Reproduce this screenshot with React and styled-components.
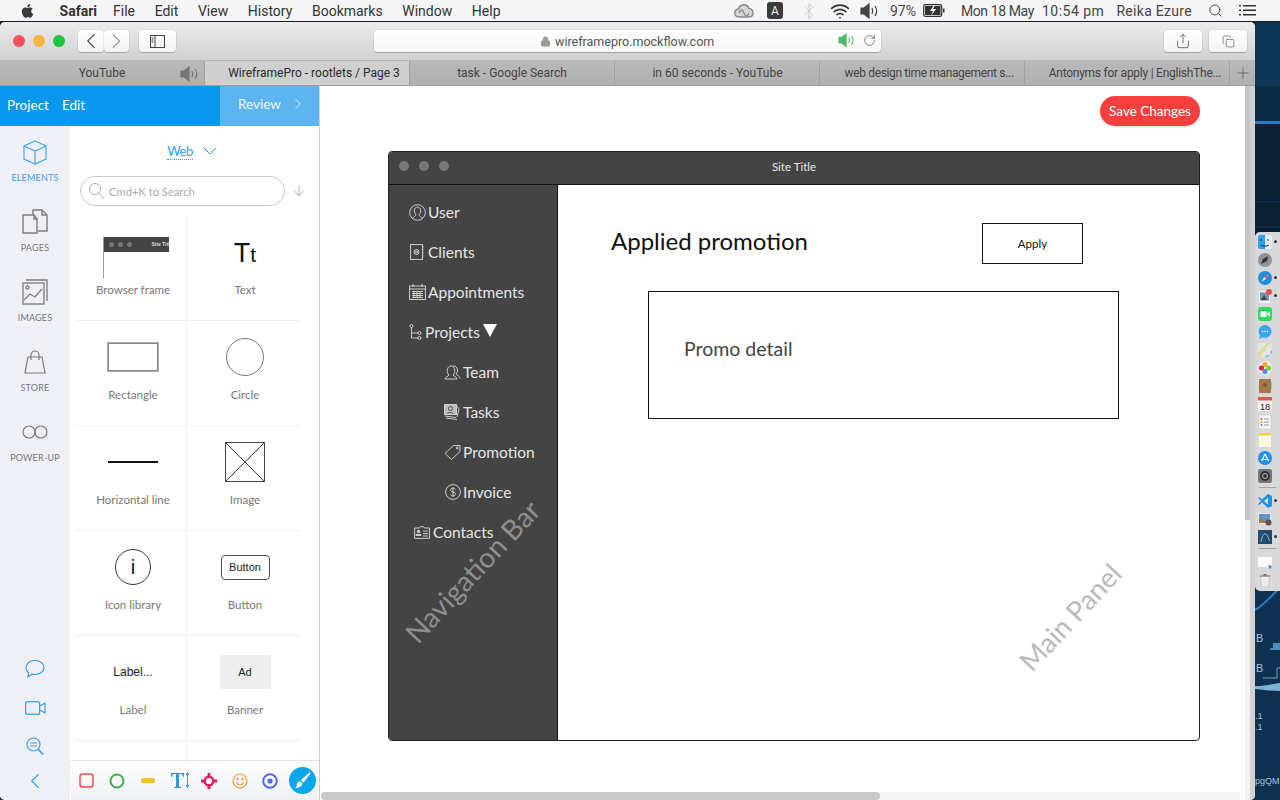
import React from 'react';
import styled, { createGlobalStyle } from 'styled-components';
import { ChevronLeft, ChevronRight, ChevronDown, Share, Copy, Plus, ArrowDown, Search, RotateCw, Lock, Wifi, Bluetooth } from 'lucide-react';

const Global = createGlobalStyle`
  html, body { margin: 0; padding: 0; width: 1280px; height: 800px; overflow: hidden; background: #0c2236; }
  * { box-sizing: border-box; }
  #root { width: 1280px; height: 800px; }
`;

const Screen = styled.div`
  position: relative; width: 1280px; height: 800px; display: flex; flex-direction: column; overflow: hidden;
`;
const MenuBar = styled.div`
  height: 22px; flex: none; background: #f5f5f5; display: flex; align-items: center; padding: 0 24px 0 20px;
  font: 14px Roboto, "Liberation Sans", sans-serif; color: #333; border-bottom: 1px solid #15202c;
`;
const MenuLeft = styled.div`display: flex; align-items: center; gap: 19.6px;`;
const AppName = styled.span`font-weight: 700; margin-left: 6px; margin-right: -3.6px;`;
const MenuRight = styled.div`margin-left: auto; display: flex; align-items: center;`;
const MenuItem = styled.span`
  margin-left: ${p => p.$ml || 0}px; display: flex; align-items: center; color: #444; white-space: nowrap; letter-spacing: ${p => p.$ls || 0}px;
`;
const ABadge = styled.span`
  width: 16px; height: 17px; border-radius: 3px; background: #3b3b3b; color: #eee; font-size: 12px;
  display: flex; align-items: center; justify-content: center;
`;

const Body = styled.div`flex: 1; display: flex; min-height: 0;`;
const Win = styled.div`
  width: 1255px; flex: none; display: flex; flex-direction: column; border-radius: 5px; overflow: hidden; background: #fff;
`;
const Desktop = styled.div`flex: 1; background: #0c2236; position: relative; overflow: hidden;`;

const Toolbar = styled.div`
  height: 39px; flex: none; background: linear-gradient(#ebebeb, #d2d2d2); border-bottom: 1px solid #b8b8b8;
  display: flex; align-items: center; padding: 0 8px 0 13px;
`;
const Light = styled.span`
  width: 12px; height: 12px; border-radius: 50%; background: ${p => p.$c}; margin-right: 8px; flex: none;
`;
const ToolBtn = styled.div`
  height: 22px; width: ${p => p.$w}px; margin-left: ${p => p.$ml || 0}px; background: linear-gradient(#fff, #f3f3f3); border-radius: 4px;
  box-shadow: 0 1px 1px rgba(0,0,0,.22), 0 0 0 .5px rgba(0,0,0,.08); display: flex; align-items: center; justify-content: center; color: #555; flex: none;
`;
const AddressBar = styled.div`
  width: 507px; height: 22px; margin-left: 198px; background: linear-gradient(#fff, #f6f6f6); border-radius: 4px;
  box-shadow: 0 1px 1px rgba(0,0,0,.22), 0 0 0 .5px rgba(0,0,0,.08); display: flex; align-items: center; position: relative; flex: none;
  font: 12.5px Roboto, sans-serif; color: #555; padding-left: 166px; gap: 4px;
`;
const AddressEnd = styled.div`position: absolute; right: 5px; top: 3px; display: flex; align-items: center; gap: 7px; color: #555;`;

const TabBar = styled.div`
  height: 25px; flex: none; display: flex; background: linear-gradient(#b9b9b9, #b0b0b0); border-bottom: 1px solid #9f9f9f;
  font: 12px Roboto, sans-serif; color: #3f3f3f;
`;
const Tab = styled.div`
  width: 205px; flex: none; position: relative; display: flex; align-items: center; justify-content: center;
  border-right: 1px solid #a0a0a0; background: ${p => p.$active ? '#cfcfcf' : 'transparent'}; color: ${p => p.$active ? '#2a2a2a' : '#444'};
  white-space: nowrap; padding-left: ${p => p.$pad || 0}px; letter-spacing: ${p => p.$ls || 0}px;
`;
const TabSpeaker = styled.span`position: absolute; right: 4px; top: 5px; display: flex;`;
const TabPlus = styled.div`flex: 1; display: flex; align-items: center; justify-content: center; color: #555;`;

const AppArea = styled.div`flex: 1; display: flex; min-height: 0; position: relative;`;
const LeftPanel = styled.div`width: 320px; flex: none; display: flex; flex-direction: column; border-right: 1px solid #d0d0d0;`;
const AppHeader = styled.div`height: 40px; flex: none; display: flex; font: 13.5px Lato, "Noto Sans", sans-serif; color: #fff;`;
const HeaderMain = styled.div`width: 220px; background: #0998ee; display: flex; align-items: center; padding: 0 0 2px 7px; gap: 13px;`;
const HeaderReview = styled.div`flex: 1; background: #5cb5f0; display: flex; align-items: center; padding: 0 0 4px 18px; gap: 8px; color: #eef7ff;`;

const PanelBody = styled.div`flex: 1; display: flex; min-height: 0;`;
const Rail = styled.div`width: 70px; flex: none; background: #eef0f5; display: flex; flex-direction: column; padding-top: 12px;`;
const RailItem = styled.div`
  height: 70px; flex: none; display: flex; flex-direction: column; align-items: center;
  color: ${p => p.$active ? '#3a9df0' : '#777'}; font: 9px Lato, "Noto Sans", sans-serif; letter-spacing: .2px;
`;
const RailIcon = styled.div`height: 28px; width: 100%; display: flex; align-items: center; justify-content: center; margin-bottom: 6px;`;
const RailBottom = styled.div`margin-top: auto; display: flex; flex-direction: column; align-items: center; padding-bottom: 3px;`;
const RailTool = styled.div`height: ${p => p.$h}px; display: flex; align-items: center; justify-content: center; color: #3a9df0;`;

const Palette = styled.div`flex: 1; display: flex; flex-direction: column; min-width: 0; background: #fff;`;
const WebSwitch = styled.div`
  height: 50px; flex: none; display: flex; align-items: center; justify-content: center; gap: 5px; color: #2f9df0;
  font: 13px Lato, "Noto Sans", sans-serif; letter-spacing: -.5px;
`;
const WebLabel = styled.span`border-bottom: 1px dotted #2f9df0; line-height: 16px;`;
const SearchRow = styled.div`display: flex; align-items: center; height: 30px; flex: none; padding-left: 10px; color: #888;`;
const SearchField = styled.div`
  width: 205px; height: 30px; flex: none; border: 1px solid #c9c9c9; border-radius: 15px; display: flex; align-items: center; padding-left: 7px; gap: 4px;
  color: #aaa; font: 11.2px Lato, "Noto Sans", sans-serif; margin-right: 6px;
`;
const Grid = styled.div`
  flex: 1; min-height: 0; margin: 10px 20px 0 5px; display: grid; grid-template-columns: 112px 112px; grid-auto-rows: 105px; overflow: hidden; position: relative;
`;
const Cell = styled.div`
  border-bottom: 1px solid #eee; border-right: ${p => p.$right ? 'none' : '1px solid #eee'}; display: flex; flex-direction: column; align-items: center;
  font: 11.5px Lato, "Noto Sans", sans-serif; color: #777; padding-left: ${p => p.$right ? 4 : 5}px;
`;
const Preview = styled.div`height: 60px; margin-top: 6px; display: flex; align-items: center; justify-content: center; width: 100%; color: #222;`;
const Caption = styled.div`line-height: 16px;`;

const MiniFrame = styled.div`
  width: 66px; height: 41px; border-left: 1px solid #999; position: relative; margin: 10px 0 0 5px;
`;
const MiniBar = styled.div`
  height: 15px; background: #444; display: flex; align-items: center; padding-left: 5px; gap: 4px;
  font: 5px "Liberation Sans", sans-serif; color: #ddd; overflow: hidden; white-space: nowrap;
`;
const MiniDot = styled.i`width: 5px; height: 5px; border-radius: 50%; background: #777; flex: none;`;
const MiniTitle = styled.span`margin-left: 16px; font-weight: 700;`;
const TextIcon = styled.div`font: 27px "Liberation Sans", sans-serif; color: #111; margin-top: 3px; span { font-size: 21px; }`;
const RectIcon = styled.div`width: 50px; height: 28px; border: 1px solid #888; outline: .5px solid #aaa;`;
const CircleIcon = styled.div`width: 38px; height: 38px; border-radius: 50%; border: 1px solid #777;`;
const LineIcon = styled.div`width: 50px; height: 2px; background: #111;`;
const InfoIcon = styled.div`
  width: 36px; height: 36px; border-radius: 50%; border: 1px solid #333; display: flex; align-items: center; justify-content: center;
  font: 20px "Liberation Sans", sans-serif; color: #111;
`;
const ButtonIcon = styled.div`
  width: 49px; height: 25px; border: 1px solid #555; border-radius: 4px; display: flex; align-items: center; justify-content: center; font: 11px "Liberation Sans", sans-serif; color: #222;
`;
const LabelIcon = styled.div`font: 12px "Liberation Sans", sans-serif; color: #222;`;
const BannerIcon = styled.div`
  width: 51px; height: 34px; background: #eee; display: flex; align-items: center; justify-content: center; font: 11px "Liberation Sans", sans-serif; color: #222;
`;
const BottomTools = styled.div`
  position: absolute; left: 71px; width: 248px; bottom: 0; height: 40px; background: linear-gradient(#fff, #eef0f4); border-top: 1px solid #e4e4e4;
  display: flex; align-items: center;
`;
const ToolSlot = styled.div`width: ${p => p.$w || 30.7}px; display: flex; align-items: center; justify-content: center; flex: none;`;
const BrushBtn = styled.div`
  width: 27px; height: 27px; border-radius: 50%; background: #08a6ea; display: flex; align-items: center; justify-content: center;
`;

const Canvas = styled.div`flex: 1; min-width: 0; position: relative; padding: 10px 0 0 68px; background: #fff; display: flex; flex-direction: column;`;
const SaveRow = styled.div`height: 55px; flex: none; width: 812px; display: flex; justify-content: flex-end; align-items: flex-start;`;
const SaveBtn = styled.div`
  width: 100px; height: 30px; border-radius: 15px; background: #f83f3f; color: #fff; font: 13.5px Lato, "Noto Sans", sans-serif;
  display: flex; align-items: center; justify-content: center; box-shadow: 0 1px 2px rgba(0,0,0,.15);
`;
const Frame = styled.div`
  width: 812px; height: 590px; border: 1px solid #222; border-radius: 4px; display: flex; flex-direction: column; overflow: hidden; position: relative; background: #fff;
`;
const FrameBar = styled.div`
  height: 32px; flex: none; background: #444; position: relative; display: flex; align-items: center; justify-content: center; padding-bottom: 3px;
  font: 11.5px Lato, "Noto Sans", sans-serif; color: #e8e8e8;
`;
const FrameDots = styled.div`position: absolute; left: 10px; top: 9px; display: flex; gap: 10px;`;
const FrameDot = styled.i`width: 10px; height: 10px; border-radius: 50%; background: #777;`;
const FrameBody = styled.div`flex: 1; display: flex; min-height: 0; border-top: 1px solid #111;`;
const Nav = styled.div`
  width: 169px; flex: none; background: #444; border-right: 1px solid #111; padding-top: 7px; display: flex; flex-direction: column;
  font: 15.5px Lato, "Noto Sans", sans-serif; color: #e6e6e6;
`;
const NavRow = styled.div`
  height: 40px; flex: none; display: flex; align-items: center; padding-left: ${p => p.$indent}px; gap: ${p => p.$gap ?? 2}px;
`;
const Triangle = styled.span`
  width: 0; height: 0; border-left: 7px solid transparent; border-right: 7px solid transparent; border-top: 13px solid #fff; margin-top: -3px;
`;
const Watermark = styled.div`
  position: absolute; left: ${p => p.$x}px; top: ${p => p.$y}px; transform: translate(-50%, -50%) rotate(-47deg); white-space: nowrap;
  font: ${p => p.$s}px Lato, "Noto Sans", sans-serif; color: ${p => p.$c};
`;
const MainPanel = styled.div`flex: 1; min-width: 0; padding: 38px 0 0 53px;`;
const HeadRow = styled.div`display: flex; align-items: center; height: 41px;`;
const Heading = styled.div`width: 371px; flex: none; margin-top: -6px; font: 24px Lato, "Noto Sans", sans-serif; color: #111;`;
const ApplyBtn = styled.div`
  width: 101px; height: 41px; border: 1px solid #111; display: flex; align-items: center; justify-content: center; font: 11.5px Lato, "Noto Sans", sans-serif; color: #111;
`;
const Detail = styled.div`
  width: 471px; height: 128px; margin: 27px 0 0 37px; border: 1px solid #111; padding: 45px 0 0 35px; font: 19.5px Lato, "Noto Sans", sans-serif; color: #444;
`;

const VScroll = styled.div`
  position: absolute; right: 0; top: 0; bottom: 0; width: 10px; background: linear-gradient(90deg, #f3f3f3 0 50%, #d2d2d2 50%);
`;
const VThumb = styled.div`position: absolute; left: 0; top: 0; width: 10px; height: 434px; background: linear-gradient(90deg, #c6c6c6 0 50%, #d0d0d0 50%);`;
const HScroll = styled.div`position: absolute; left: 1px; right: 15px; bottom: 0; height: 8px; background: #f5f5f5;`;
const HThumb = styled.div`width: 559px; height: 8px; border-radius: 4px; background: #c9c9c9;`;

const Dock = styled.div`
  position: absolute; left: 1255px; top: 232px; width: 25px; height: 359px; background: #d9d9d9; border-radius: 5px 0 0 5px;
  display: flex; flex-direction: column; padding: 1px 0 0 3px; align-items: flex-start;
`;
const DockSlot = styled.div`height: 18px; width: 22px; flex: none; display: flex; align-items: center; position: relative;`;
const DockDot = styled.i`position: absolute; left: 16px; top: 7px; width: 3px; height: 3px; border-radius: 50%; background: #333;`;
const DockSep = styled.div`width: 17px; height: 1px; background: #a5a5a5; margin: 2px 0 4px 1px; flex: none;`;
const WallLabel = styled.div`
  position: absolute; left: ${p => p.$x}px; top: ${p => p.$y}px; font: ${p => p.$s || 9}px "Liberation Sans", sans-serif; color: #a9c4d8; white-space: nowrap;
`;

const Apple = () => (
  <svg width="14" height="16" viewBox="0 0 14 16" fill="#3a3a3a">
    <path d="M11.2 8.4c0-1.7 1.4-2.5 1.5-2.6-.8-1.2-2.100-1.400-2.500-1.400-1.100-.1-2.100.6-2.600.6-.6 0-1.400-.6-2.300-.6C4.100 4.400 3 5 2.400 6 1.200 8.200 2.100 11.400 3.300 13.100c.6.800 1.300 1.800 2.200 1.700.9 0 1.200-.6 2.300-.6s1.400.6 2.300.6c1 0 1.600-.8 2.200-1.700.7-1 1-1.900 1-2-.1 0-1.900-.7-2.100-2.700z" />
    <path d="M9.500 3.300c.5-.6.800-1.400.7-2.300-.7 0-1.600.5-2.100 1.100-.5.500-.9 1.400-.8 2.200.8.100 1.700-.4 2.200-1z" />
  </svg>
);
const CC = () => (
  <svg width="20" height="16" viewBox="0 0 20 16" fill="none" stroke="#8d8d8d" strokeWidth="1.6">
    <path d="M5 14a4 4 0 0 1-.5-8A5.500 5.500 0 0 1 15 5.500 4.300 4.300 0 0 1 15.500 14z" fill="#d7d7d7" />
    <path d="M5 10c2-4 3-4 5 0s3 4 5 0" />
  </svg>
);
const Speaker = ({ c = '#444', s = 20 }) => (
  <svg width={s} height={s * .8} viewBox="0 0 20 16" fill="none" stroke={c} strokeWidth="1.2">
    <path d="M1 5h3l5-4v14l-5-4H1z" fill={c} />
    <path d="M12 5c1 2 1 4 0 6M15 3c2 3 2 7 0 10" />
  </svg>
);
const Battery = () => (
  <svg width="22" height="13" viewBox="0 0 22 13" fill="none">
    <rect x=".7" y=".7" width="18" height="11.600" rx="1.500" stroke="#333" strokeWidth="1.200" />
    <rect x="2" y="2" width="15.500" height="9" fill="#333" />
    <path d="M11 1 7 7h3l-2 5 5-7h-3l2-4z" fill="#fff" />
    <rect x="20" y="4.500" width="1.500" height="4" fill="#333" />
  </svg>
);
const MenuList = () => (
  <svg width="17" height="11" viewBox="0 0 17 11" fill="#333">
    <rect x="0" y="0" width="2" height="1.500" /><rect x="4" y="0" width="13" height="1.500" />
    <rect x="0" y="4.500" width="2" height="1.500" /><rect x="4" y="4.500" width="13" height="1.500" />
    <rect x="0" y="9" width="2" height="1.500" /><rect x="4" y="9" width="13" height="1.500" />
  </svg>
);
const SidebarIcon = () => (
  <svg width="15" height="13" viewBox="0 0 15 13" fill="none" stroke="#444">
    <rect x=".5" y=".5" width="14" height="12" />
    <path d="M5 .5v12M1.500 3h2M1.500 5h2M1.500 7h2" />
  </svg>
);

const S = { fill: 'none', stroke: '#7c7c7c', strokeWidth: 1.2 };
const CubeIcon = () => (
  <svg width="24" height="25" viewBox="0 0 24 25" fill="none" stroke="#4aa5f2" strokeWidth="1.200">
    <path d="M12 1 23 6v13l-11 5-11-5V6z" /><path d="M1 6l11 5 11-5M12 11v13" />
  </svg>
);
const PagesIcon = () => (
  <svg width="26" height="26" viewBox="0 0 26 26" {...S} strokeWidth="1.400">
    <path d="M1 6h11l3 4v14H1z" /><path d="M11 6V1h9l5 5v16h-9" /><path d="M20 1v5h5M12 6v4h3" />
  </svg>
);
const ImagesIcon = () => (
  <svg width="26" height="26" viewBox="0 0 26 26" {...S} strokeWidth="1.300">
    <rect x="1" y="4" width="21" height="21" /><path d="M4 1h21v21" />
    <circle cx="5.500" cy="8.500" r="1.500" /><path d="M2 21l6-6 5 3 7-8" />
  </svg>
);
const StoreIcon = () => (
  <svg width="22" height="24" viewBox="0 0 22 24" {...S}>
    <path d="M4 7h14l3 16H1z" /><path d="M7 10V5a4 4 0 0 1 8 0v5" />
  </svg>
);
const PowerIcon = () => (
  <svg width="26" height="14" viewBox="0 0 26 14" {...S}>
    <circle cx="7" cy="7" r="6" /><circle cx="19" cy="7" r="6" />
  </svg>
);
const Chat = () => (
  <svg width="20" height="20" viewBox="0 0 20 20" fill="none" stroke="#3a9df0" strokeWidth="1.200">
    <path d="M10 1.500c5 0 9 2.800 9 7s-4 7-9 7c-1 0-2-.100-3-.300L3 18l.500-4C2 12.700 1 10.800 1 8.500c0-4.200 4-7 9-7z" />
  </svg>
);
const Video = () => (
  <svg width="21" height="14" viewBox="0 0 21 14" fill="none" stroke="#3a9df0" strokeWidth="1.200">
    <rect x=".6" y=".6" width="14" height="12.800" rx="2" /><path d="M15 5l5-3v10l-5-3" />
  </svg>
);
const ZoomChat = () => (
  <svg width="18" height="19" viewBox="0 0 18 19" fill="none" stroke="#3a9df0" strokeWidth="1.200">
    <circle cx="7.500" cy="7.500" r="6.500" /><path d="M12 12l5 5.500" strokeWidth="1.800" /><path d="M4 6h7M4 9h7" />
  </svg>
);
const MagSearch = () => (
  <svg width="17" height="18" viewBox="0 0 17 18" fill="none" stroke="#aaa" strokeWidth="1">
    <circle cx="7" cy="7" r="5.500" /><path d="M11 11l5 6" />
  </svg>
);
const ImageCross = () => (
  <svg width="40" height="40" viewBox="0 0 40 40" fill="none" stroke="#444">
    <rect x=".5" y=".5" width="39" height="39" /><path d="M.5 .5l39 39M39.500 .5l-39 39" />
  </svg>
);

const ToolIcons = {
  rect: <svg width="15" height="15"><rect x="1" y="1" width="13" height="13" rx="2.500" fill="none" stroke="#f04b4b" strokeWidth="1.500" /></svg>,
  circle: <svg width="16" height="16"><circle cx="8" cy="8" r="6.500" fill="none" stroke="#3fae4d" strokeWidth="2" /></svg>,
  bar: <svg width="14" height="5"><rect width="14" height="5" rx="1.500" fill="#fbbd3a" /></svg>,
  text: (
    <svg width="20" height="17" viewBox="0 0 20 17" fill="#2f97dd">
      <path d="M0 1h13v4h-.8c-.3-2-1-3-2.700-3H8v12.500l2 .7v.8H3v-.8l2-.7V2H3.500C1.800 2 1.100 3 .8 5H0z" />
      <path d="M16.500 0l2 3h-1.500v10h1.500l-2 3-2-3H16V3h-1.500z" />
    </svg>
  ),
  target: (
    <svg width="16" height="16" viewBox="0 0 16 16" fill="none" stroke="#ec1c63" strokeWidth="2.400">
      <circle cx="8" cy="8" r="4.300" /><path d="M8 0v3.500M8 12.500V16M0 8h3.500M12.500 8H16" strokeWidth="3" />
    </svg>
  ),
  smile: (
    <svg width="16" height="16" viewBox="0 0 16 16" fill="none" stroke="#f49b3b" strokeWidth="1.200">
      <circle cx="8" cy="8" r="7" /><path d="M4.500 9.500c1.500 3 5.500 3 7 0" /><circle cx="5.500" cy="6" r=".6" /><circle cx="10.500" cy="6" r=".6" />
    </svg>
  ),
  ring: (
    <svg width="16" height="16" viewBox="0 0 16 16" fill="none">
      <circle cx="8" cy="8" r="6.800" stroke="#5568ee" strokeWidth="2" /><circle cx="8" cy="8" r="2.600" fill="#5568ee" />
    </svg>
  ),
};
const Brush = () => (
  <svg width="17" height="17" viewBox="0 0 17 17" fill="#fff">
    <path d="M16 .5c.6.400.6 1 .2 1.500L9.500 10.500 6.800 8.300 14.800.9c.4-.4.800-.5 1.200-.4z" />
    <path d="M6 9.200l2.500 2c-.2 2.600-3 4.800-7.500 4.800 1.800-1 1.600-2 1.800-3.300.2-1.800 1.500-3.400 3.200-3.500z" />
  </svg>
);

const W = { fill: 'none', stroke: '#dcdcdc', strokeWidth: .9 };
const WfUser = () => (
  <svg width="17" height="17" viewBox="0 0 17 17" {...W}>
    <circle cx="8.500" cy="8.500" r="7.800" />
    <path d="M4 14.500c0-1.500 2.800-2.500 3-3.500.100-.5-1.700-2-1.700-4.500 0-2 1.300-3.400 3.200-3.400s3.200 1.400 3.200 3.400c0 2.500-1.800 4-1.700 4.500.2 1 3 2 3 3.500" />
  </svg>
);
const WfClients = () => (
  <svg width="14" height="16" viewBox="0 0 14 16" {...W}>
    <rect x=".6" y=".6" width="12" height="14.800" /><path d="M12.600 3h1M12.600 6h1M12.600 9h1M12.600 12h1" />
    <circle cx="6.500" cy="8" r="2.500" /><circle cx="6.500" cy="8" r="1" />
  </svg>
);
const WfCalendar = () => (
  <svg width="17" height="16" viewBox="0 0 17 16" {...W}>
    <rect x=".6" y="2" width="15.800" height="13.500" /><path d="M.6 5h15.800M4 0v3M13 0v3M3 7.500h11M3 9.500h11M3 11.500h11M3 13.500h11M5 7v7M8 7v7M11 7v7" />
  </svg>
);
const WfTree = () => (
  <svg width="13" height="16" viewBox="0 0 13 16" {...W}>
    <circle cx="2.500" cy="2" r="1.500" /><circle cx="10.500" cy="9" r="1.500" /><circle cx="10.500" cy="14" r="1.500" />
    <path d="M2.500 3.500V14H9M2.500 9H9" />
  </svg>
);
const WfTeam = () => (
  <svg width="17" height="15" viewBox="0 0 17 15" {...W}>
    <path d="M1 14c0-2 3.500-2.500 3.800-4C3.500 8.500 3.200 7 3.200 5.500 3.200 3 4.800 1 7 1s3.800 2 3.800 4.500c0 1.500-.3 3-1.600 4.500.3 1.500 3.800 2 3.800 4z" />
    <path d="M9 1c2-.5 4.500 1 4.500 4 0 1.500-.5 3-1.500 4 .3 1 4 2 4 4.500" />
  </svg>
);
const WfTasks = () => (
  <svg width="16" height="16" viewBox="0 0 16 16" {...W}>
    <rect x=".6" y=".6" width="12" height="10" fill="#bdbdbd" stroke="#ddd" /><path d="M1 12l11 1.500M2 14l11 1.500M13 2l2 3-2 8" /><circle cx="6.500" cy="4.500" r="2" stroke="#444" /><path d="M3 10c.5-2 6-2 6.500 0" stroke="#444" />
  </svg>
);
const WfTag = () => (
  <svg width="17" height="16" viewBox="0 0 17 16" {...W}>
    <path d="M1 9.500 9.500 1.500h6.500V7.500L7.500 15.500z" /><circle cx="13.300" cy="4" r="1" />
  </svg>
);
const WfDollar = () => (
  <svg width="16" height="16" viewBox="0 0 16 16" {...W}>
    <circle cx="8" cy="8" r="7.400" /><path d="M10.500 5.500C10 4.500 9 4.200 8 4.200c-1.500 0-2.500.8-2.500 1.900 0 2.800 5 1.300 5 3.900 0 1.100-1 1.900-2.500 1.900-1.100 0-2.100-.4-2.600-1.400M8 3v10" />
  </svg>
);
const WfContact = () => (
  <svg width="16" height="13" viewBox="0 0 16 13" {...W}>
    <path d="M.6 2h5l1-1.400h3L10.500 2h5v10.400H.6z" /><circle cx="4.500" cy="5.500" r="1.300" fill="#ddd" /><path d="M2 9.500h5V8.500H2zM9 5h5M9 7.500h5M9 10h5" />
  </svg>
);

const Dk = ({ children }) => <svg width="14" height="14" viewBox="0 0 14 14">{children}</svg>;
const dockIcons = {
  finder: <Dk><rect width="14" height="14" rx="2" fill="#e8f2fb" /><path d="M0 2a2 2 0 0 1 2-2h5v14H2a2 2 0 0 1-2-2z" fill="#2fa4ee" /><path d="M3 4v2M10 4v2M3 10c2 1.500 6 1.500 8 0" stroke="#123" fill="none" /></Dk>,
  rocket: <Dk><circle cx="7" cy="7" r="7" fill="#8d9299" /><path d="M3 11l2-5 5-3-1 5z" fill="#333" /></Dk>,
  safari: <Dk><circle cx="7" cy="7" r="7" fill="#1b8fe6" /><path d="M10.500 3.500 8 8 3.500 10.500 6 6z" fill="#fff" /><path d="M10.500 3.500 8 8 6 6z" fill="#e8423d" /></Dk>,
  preview: <Dk><rect x="1" y="2" width="11" height="12" fill="#e6eef5" /><rect x="2" y="3.500" width="9" height="8" fill="#6f93b8" /><path d="M3 11l3-5 3 5z" fill="#4b3d2f" /><circle cx="11" cy="3" r="3" fill="#f2494c" /></Dk>,
  facetime: <Dk><rect width="14" height="14" rx="3" fill="#2fdb5e" /><rect x="2.500" y="4" width="6" height="6" rx="1" fill="#fff" /><path d="M9 6.500l3-2v5l-3-2z" fill="#fff" /></Dk>,
  messages: <Dk><circle cx="7" cy="6.500" r="6.500" fill="#3aa6f3" /><path d="M2 10l-1 4 4-2z" fill="#3aa6f3" /><circle cx="4.500" cy="6.500" r=".8" fill="#fff" /><circle cx="7" cy="6.500" r=".8" fill="#fff" /><circle cx="9.500" cy="6.500" r=".8" fill="#fff" /></Dk>,
  maps: <Dk><rect width="14" height="14" rx="2" fill="#dfe8dc" /><path d="M0 9 9 0h3L2 14H0z" fill="#e6d9a0" /><path d="M7 14l7-7v3l-4 4z" fill="#6fb0e6" /><circle cx="10" cy="10" r="2.500" fill="#e4e4e4" /></Dk>,
  photos: <Dk><circle cx="7" cy="7" r="7" fill="#eee" /><circle cx="7" cy="3.500" r="2.500" fill="#f5a623" /><circle cx="10.500" cy="7" r="2.500" fill="#7ed321" /><circle cx="7" cy="10.500" r="2.500" fill="#4a90e2" /><circle cx="3.500" cy="7" r="2.500" fill="#d0215e" /></Dk>,
  contacts: <Dk><rect x="1" width="12" height="14" rx="1" fill="#a5774a" /><rect x="12" y="3" width="1.500" height="7" fill="#6aa84f" /><circle cx="7" cy="6" r="2" fill="#7a5632" /></Dk>,
  calendar: <Dk><rect width="14" height="14" fill="#f4f4f4" /><rect width="14" height="3.500" fill="#e0574f" /><text x="7" y="12.500" fontSize="9" textAnchor="middle" fill="#222" fontFamily="Liberation Sans">18</text></Dk>,
  reminders: <Dk><rect x="1" width="12" height="14" fill="#f5f5f5" stroke="#bbb" strokeWidth=".5" /><circle cx="3.500" cy="4" r="1" fill="#e44" /><circle cx="3.500" cy="7" r="1" fill="#e90" /><circle cx="3.500" cy="10" r="1" fill="#48e" /><path d="M6 4h5M6 7h5M6 10h5" stroke="#999" /></Dk>,
  notes: <Dk><rect x="1" width="12" height="14" fill="#fbf7dc" /><rect x="1" width="12" height="2.500" fill="#f2cf4a" /></Dk>,
  appstore: <Dk><circle cx="7" cy="7" r="7" fill="#1f8ef0" /><path d="M7 3 3.500 10M7 3l3.500 7M3 8.500h8" stroke="#fff" strokeWidth="1.200" /></Dk>,
  prefs: <Dk><rect width="14" height="14" rx="2" fill="#777" /><circle cx="7" cy="7" r="5" fill="#333" /><circle cx="7" cy="7" r="2.500" fill="none" stroke="#bbb" /></Dk>,
  vscode: <Dk><path d="M10 0l4 2v10l-4 2-6-5.500L1 11 0 10l3-3-3-3 1-1 3 2.500z" fill="#1f8fe0" /><path d="M10 3.500 6 7l4 3.500z" fill="#d9d9d9" /></Dk>,
  photo2: <Dk><rect y="1" width="13" height="11" fill="#e8e8e8" /><rect x="1" y="2" width="11" height="5" fill="#5e94c8" /><rect x="1" y="7" width="11" height="4" fill="#9a7f55" /><circle cx="10.500" cy="10.500" r="3" fill="#555" /></Dk>,
  mysql: <Dk><rect x="-1" width="16" height="14" rx="1.500" fill="#1e4d6e" /><path d="M3 12c1-6 3-9 5-8s2 5 4 7" stroke="#cfe1ec" fill="none" strokeWidth=".7" /></Dk>,
  doc: <Dk><rect y="2" width="14" height="10" fill="#fafafa" /><path d="M10 10l4 1-2 3z" fill="#2a7fd6" /></Dk>,
  trash: <Dk><path d="M2.500 3h9l-1 11h-7z" fill="#ececec" stroke="#aaa" strokeWidth=".5" /><path d="M2 3h10" stroke="#777" /><path d="M5 1h4l-1 2H6z" fill="#777" /></Dk>,
};

const menus = ['File', 'Edit', 'View', 'History', 'Bookmarks', 'Window', 'Help'];
const tabs = [
  ['WireframePro - rootlets / Page 3', 14, 0],
  ['task - Google Search', 0, 0],
  ['in 60 seconds - YouTube', 1, 0],
  ['web design time management s...', 14, -.35],
  ['Antonyms for apply | EnglishThe...', 16, -.25],
];
const rail = [
  ['ELEMENTS', <CubeIcon />, true], ['PAGES', <PagesIcon />], ['IMAGES', <ImagesIcon />], ['STORE', <StoreIcon />], ['POWER-UP', <PowerIcon />],
];
const cells = [
  ['Browser frame', <MiniFrame><MiniBar><MiniDot /><MiniDot /><MiniDot /><MiniTitle>Site Title</MiniTitle></MiniBar></MiniFrame>],
  ['Text', <TextIcon>T<span>t</span></TextIcon>],
  ['Rectangle', <RectIcon />],
  ['Circle', <CircleIcon />],
  ['Horizontal line', <LineIcon />],
  ['Image', <ImageCross />],
  ['Icon library', <InfoIcon>i</InfoIcon>],
  ['Button', <ButtonIcon>Button</ButtonIcon>],
  ['Label', <LabelIcon>Label...</LabelIcon>],
  ['Banner', <BannerIcon>Ad</BannerIcon>],
  ['', null], ['', null],
];
const nav = [
  ['User', <WfUser />, 20, 2], ['Clients', <WfClients />, 21, 4], ['Appointments', <WfCalendar />, 20, 2],
  ['Projects', <WfTree />, 20, 3, true],
  ['Team', <WfTeam />, 55, 2], ['Tasks', <WfTasks />, 55, 3], ['Promotion', <WfTag />, 55, 2], ['Invoice', <WfDollar />, 56, 2],
  ['Contacts', <WfContact />, 25, 3],
];
const dockA = ['finder', 'rocket', 'safari', 'preview', 'facetime', 'messages', 'maps', 'photos', 'contacts', 'calendar', 'reminders', 'notes', 'appstore', 'prefs'];
const dockDots = ['finder', 'safari', 'preview', 'vscode', 'mysql'];
const DockList = ({ names }) => names.map(n => (
  <DockSlot key={n}>{dockIcons[n]}{dockDots.includes(n) && <DockDot />}</DockSlot>
));

export default function App() {
  return (
    <Screen>
      <Global />
      <MenuBar>
        <MenuLeft>
          <Apple />
          <AppName>Safari</AppName>
          {menus.map(m => <span key={m}>{m}</span>)}
        </MenuLeft>
        <MenuRight>
          <MenuItem><CC /></MenuItem>
          <MenuItem $ml={13}><ABadge>A</ABadge></MenuItem>
          <MenuItem $ml={17}><Bluetooth size={18} color="#c4c4c4" strokeWidth={1.1} /></MenuItem>
          <MenuItem $ml={12}><Wifi size={20} color="#333" strokeWidth={2} /></MenuItem>
          <MenuItem $ml={10}><Speaker /></MenuItem>
          <MenuItem $ml={10}>97%</MenuItem>
          <MenuItem $ml={7}><Battery /></MenuItem>
          <MenuItem $ml={16} $ls={-.4}>Mon 18 May</MenuItem>
          <MenuItem $ml={8} $ls={.5}>10:54 pm</MenuItem>
          <MenuItem $ml={12} $ls={.3}>Reika Ezure</MenuItem>
          <MenuItem $ml={16}><Search size={15} color="#444" strokeWidth={1.5} /></MenuItem>
          <MenuItem $ml={16}><MenuList /></MenuItem>
        </MenuRight>
      </MenuBar>
      <Body>
        <Win>
          <Toolbar>
            <Light $c="#f4545a" /><Light $c="#f9b33f" /><Light $c="#20c33f" />
            <ToolBtn $w={26} $ml={5}><ChevronLeft size={26} strokeWidth={1.1} /></ToolBtn>
            <ToolBtn $w={25} $ml={0}><ChevronRight size={26} strokeWidth={1.1} color="#999" /></ToolBtn>
            <ToolBtn $w={37} $ml={10}><SidebarIcon /></ToolBtn>
            <AddressBar>
              <Lock size={11} fill="#999" color="#999" />
              <span>wireframepro.mockflow.com</span>
              <AddressEnd><Speaker c="#52b96a" s={18} /><RotateCw size={13} strokeWidth={1.3} /></AddressEnd>
            </AddressBar>
            <ToolBtn $w={38} $ml={283}><Share size={16} strokeWidth={1.2} /></ToolBtn>
            <ToolBtn $w={38} $ml={7}><Copy size={13} strokeWidth={1.2} /></ToolBtn>
          </Toolbar>
          <TabBar>
            <Tab>YouTube<TabSpeaker><Speaker c="#777" s={20} /></TabSpeaker></Tab>
            {tabs.map(([t, pad, ls], i) => <Tab key={t} $active={i === 0} $pad={pad} $ls={ls}>{t}</Tab>)}
            <TabPlus><Plus size={18} strokeWidth={1} /></TabPlus>
          </TabBar>
          <AppArea>
            <LeftPanel>
              <AppHeader>
                <HeaderMain><span>Project</span><span>Edit</span></HeaderMain>
                <HeaderReview><span>Review</span><ChevronRight size={18} strokeWidth={1.2} /></HeaderReview>
              </AppHeader>
              <PanelBody>
                <Rail>
                  {rail.map(([label, icon, active]) => (
                    <RailItem key={label} $active={active}><RailIcon>{icon}</RailIcon>{label}</RailItem>
                  ))}
                  <RailBottom>
                    <RailTool $h={39}><Chat /></RailTool>
                    <RailTool $h={39}><Video /></RailTool>
                    <RailTool $h={38}><ZoomChat /></RailTool>
                    <RailTool $h={32}><ChevronLeft size={26} strokeWidth={1} /></RailTool>
                  </RailBottom>
                </Rail>
                <Palette>
                  <WebSwitch><WebLabel>Web</WebLabel><ChevronDown size={24} strokeWidth={1} /></WebSwitch>
                  <SearchRow>
                    <SearchField><MagSearch /><span>Cmd+K to Search</span></SearchField>
                    <ArrowDown size={16} strokeWidth={1} />
                  </SearchRow>
                  <Grid>
                    {cells.map(([label, icon], i) => (
                      <Cell key={i} $right={i % 2 === 1}>
                        <Preview>{icon}</Preview>
                        <Caption>{label}</Caption>
                      </Cell>
                    ))}
                  </Grid>
                </Palette>
              </PanelBody>
              <BottomTools>
                <ToolSlot>{ToolIcons.rect}</ToolSlot>
                <ToolSlot>{ToolIcons.circle}</ToolSlot>
                <ToolSlot>{ToolIcons.bar}</ToolSlot>
                <ToolSlot $w={35}>{ToolIcons.text}</ToolSlot>
                <ToolSlot $w={22}>{ToolIcons.target}</ToolSlot>
                <ToolSlot $w={40}>{ToolIcons.smile}</ToolSlot>
                <ToolSlot $w={20}>{ToolIcons.ring}</ToolSlot>
                <ToolSlot $w={44}><BrushBtn><Brush /></BrushBtn></ToolSlot>
              </BottomTools>
            </LeftPanel>
            <Canvas>
              <SaveRow><SaveBtn>Save Changes</SaveBtn></SaveRow>
              <Frame>
                <FrameBar>
                  <FrameDots><FrameDot /><FrameDot /><FrameDot /></FrameDots>
                  Site Title
                </FrameBar>
                <FrameBody>
                  <Nav>
                    {nav.map(([label, icon, indent, gap, open]) => (
                      <NavRow key={label} $indent={indent} $gap={gap}>
                        {icon}<span>{label}</span>{open && <Triangle />}
                      </NavRow>
                    ))}
                  </Nav>
                  <MainPanel>
                    <HeadRow><Heading>Applied promotion</Heading><ApplyBtn>Apply</ApplyBtn></HeadRow>
                    <Detail>Promo detail</Detail>
                  </MainPanel>
                </FrameBody>
                <Watermark $x={83} $y={419} $s={28} $c="#8f8f8f">Navigation Bar</Watermark>
                <Watermark $x={681} $y={465} $s={27.5} $c="#b9b9b9">Main Panel</Watermark>
              </Frame>
              <VScroll><VThumb /></VScroll>
              <HScroll><HThumb /></HScroll>
            </Canvas>
          </AppArea>
        </Win>
        <Desktop>
          <svg width="25" height="778" viewBox="0 0 25 778">
            <rect width="25" height="64" fill="#0d3556" />
            <rect y="64" width="25" height="36" fill="#0d2a45" />
            <rect y="99" width="25" height="3" fill="#2c77c4" />
            <rect y="102" width="25" height="110" fill="#0b2033" />
            <path d="M0 205h25M0 180h25" stroke="#0f3a5c" />
            <rect y="569" width="25" height="209" fill="#0f3150" />
            <path d="M0 588c8-4 16-14 25-22" stroke="#2d7fc6" strokeWidth="2" fill="none" />
            <path d="M8 628h7v-2h3v-5h7v7z" fill="#4d8dbb" />
            <path d="M8 656h14v-10h3" stroke="#6aa5cf" fill="none" />
            <path d="M0 664c10 0 16-2 25-3v8c-9 0-15-1-25-2z" fill="#7fb2d4" />
          </svg>
          <WallLabel $x={1} $y={610} $s={11}>B</WallLabel>
          <WallLabel $x={1} $y={640} $s={11}>B</WallLabel>
          <WallLabel $x={0} $y={689}>.1</WallLabel>
          <WallLabel $x={0} $y={700}>.1</WallLabel>
          <WallLabel $x={0} $y={754}>pgQM</WallLabel>
        </Desktop>
      </Body>
      <Dock>
        <DockList names={dockA} />
        <DockSep />
        <DockList names={['vscode', 'photo2', 'mysql']} />
        <DockSep />
        <DockList names={['doc', 'trash']} />
      </Dock>
    </Screen>
  );
}
